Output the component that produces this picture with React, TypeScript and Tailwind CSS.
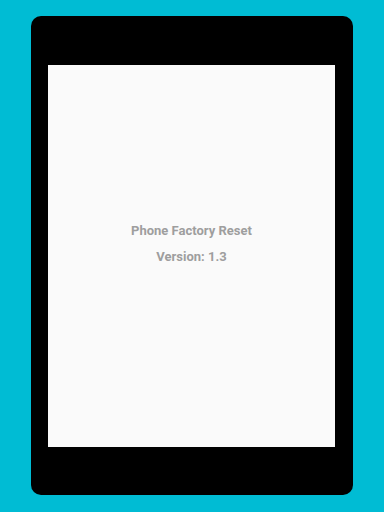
export default function App() {
    return (
        <div className="flex h-[512px] w-[384px] bg-[#00bcd4] pt-[16px] pl-[31px]">
            <div className="flex h-[479px] w-[322px] flex-col rounded-[10px] bg-black pt-[49px] pl-[17px]">
                <div className="flex h-[382px] w-[287px] flex-col items-center gap-[10px] bg-[#fafafa] pt-[158px] font-['Roboto',sans-serif] text-[13px] leading-[16px] font-bold text-[#9e9e9e]">
                    <span>Phone Factory Reset</span>
                    <span>Version: 1.3</span>
                </div>
            </div>
        </div>
    );
}
